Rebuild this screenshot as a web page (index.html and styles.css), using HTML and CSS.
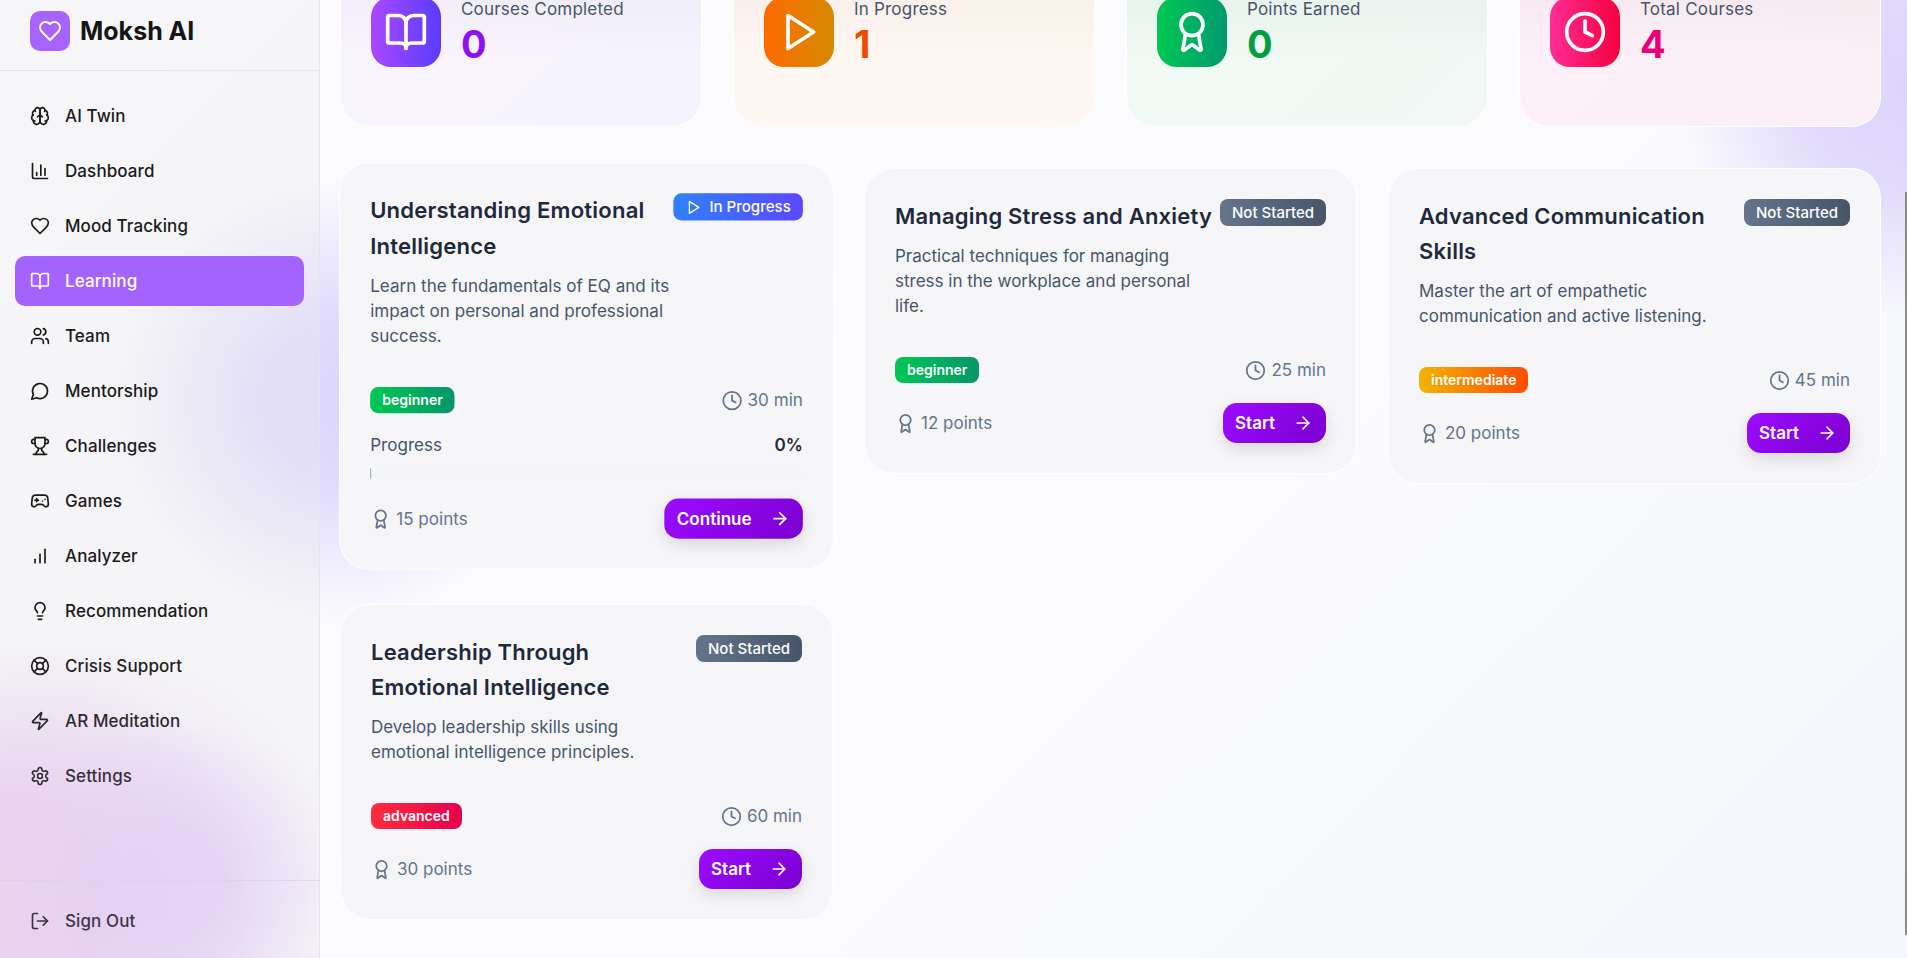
FILE: index.html
```html
<!DOCTYPE html>
<html>

<head>
    <title>Moksh AI - Learning</title>
    <link rel="stylesheet" href="styles.css">
</head>

<body>
    <svg class="sprite">
        <symbol id="i-brain" viewBox="0 0 24 24"><path d="M12 5a3 3 0 1 0-5.997.125 4 4 0 0 0-2.526 5.77 4 4 0 0 0 .556 6.588A4 4 0 1 0 12 18Z"/><path d="M12 5a3 3 0 1 1 5.997.125 4 4 0 0 1 2.526 5.77 4 4 0 0 1-.556 6.588A4 4 0 1 1 12 18Z"/><path d="M15 13a4.5 4.5 0 0 1-3-4 4.5 4.5 0 0 1-3 4"/><path d="M17.599 6.5a3 3 0 0 0 .399-1.375"/><path d="M6.003 5.125A3 3 0 0 0 6.401 6.5"/><path d="M3.477 10.896a4 4 0 0 1 .585-.396"/><path d="M19.938 10.5a4 4 0 0 1 .585.396"/><path d="M6 18a4 4 0 0 1-1.967-.516"/><path d="M19.967 17.484A4 4 0 0 1 18 18"/></symbol>
        <symbol id="i-chart" viewBox="0 0 24 24"><path d="M3 3v16a2 2 0 0 0 2 2h16"/><path d="M18 17V9"/><path d="M13 17V5"/><path d="M8 17v-3"/></symbol>
        <symbol id="i-heart" viewBox="0 0 24 24"><path d="M19 14c1.49-1.46 3-3.21 3-5.5A5.5 5.5 0 0 0 16.5 3c-1.76 0-3 .5-4.5 2-1.5-1.5-2.74-2-4.5-2A5.5 5.5 0 0 0 2 8.5c0 2.3 1.5 4.05 3 5.5l7 7Z"/></symbol>
        <symbol id="i-book" viewBox="0 0 24 24"><path d="M12 7v14"/><path d="M3 18a1 1 0 0 1-1-1V4a1 1 0 0 1 1-1h5a4 4 0 0 1 4 4 4 4 0 0 1 4-4h5a1 1 0 0 1 1 1v13a1 1 0 0 1-1 1h-6a3 3 0 0 0-3 3 3 3 0 0 0-3-3z"/></symbol>
        <symbol id="i-users" viewBox="0 0 24 24"><path d="M16 21v-2a4 4 0 0 0-4-4H6a4 4 0 0 0-4 4v2"/><circle cx="9" cy="7" r="4"/><path d="M22 21v-2a4 4 0 0 0-3-3.87"/><path d="M16 3.13a4 4 0 0 1 0 7.75"/></symbol>
        <symbol id="i-message" viewBox="0 0 24 24"><path d="M7.9 20A9 9 0 1 0 4 16.1L2 22Z"/></symbol>
        <symbol id="i-trophy" viewBox="0 0 24 24"><path d="M6 9H4.5a2.5 2.5 0 0 1 0-5H6"/><path d="M18 9h1.5a2.5 2.5 0 0 0 0-5H18"/><path d="M4 22h16"/><path d="M10 14.66V17c0 .55-.47.98-.97 1.21C7.85 18.75 7 20.24 7 22"/><path d="M14 14.66V17c0 .55.47.98.97 1.21C16.15 18.75 17 20.24 17 22"/><path d="M18 2H6v7a6 6 0 0 0 12 0V2Z"/></symbol>
        <symbol id="i-gamepad" viewBox="0 0 24 24"><line x1="6" x2="10" y1="11" y2="11"/><line x1="8" x2="8" y1="9" y2="13"/><line x1="15" x2="15.01" y1="12" y2="12"/><line x1="18" x2="18.01" y1="10" y2="10"/><path d="M17.32 5H6.68a4 4 0 0 0-3.978 3.59c-.006.052-.01.101-.017.152C2.604 9.416 2 14.456 2 16a3 3 0 0 0 3 3c1 0 1.5-.5 2-1l1.414-1.414A2 2 0 0 1 9.828 16h4.344a2 2 0 0 1 1.414.586L17 18c.5.5 1 1 2 1a3 3 0 0 0 3-3c0-1.545-.604-6.584-.685-7.258-.007-.05-.011-.1-.017-.151A4 4 0 0 0 17.32 5z"/></symbol>
        <symbol id="i-signal" viewBox="0 0 24 24"><line x1="18" x2="18" y1="20" y2="4"/><line x1="12" x2="12" y1="20" y2="10"/><line x1="6" x2="6" y1="20" y2="16"/></symbol>
        <symbol id="i-bulb" viewBox="0 0 24 24"><path d="M15 14c.2-1 .7-1.7 1.5-2.5 1-.9 1.5-2.2 1.5-3.5A6 6 0 0 0 6 8c0 1 .2 2.2 1.5 3.5.7.7 1.3 1.5 1.5 2.5"/><path d="M9 18h6"/><path d="M10 22h4"/></symbol>
        <symbol id="i-buoy" viewBox="0 0 24 24"><circle cx="12" cy="12" r="10"/><path d="m4.93 4.93 4.24 4.24"/><path d="m14.83 9.17 4.24-4.24"/><path d="m14.83 14.83 4.24 4.24"/><path d="m9.17 14.83-4.24 4.24"/><circle cx="12" cy="12" r="4"/></symbol>
        <symbol id="i-zap" viewBox="0 0 24 24"><path d="M4 14a1 1 0 0 1-.78-1.63l9.9-10.2a.5.5 0 0 1 .86.46l-1.92 6.02A1 1 0 0 0 13 10h7a1 1 0 0 1 .78 1.63l-9.9 10.2a.5.5 0 0 1-.86-.46l1.92-6.02A1 1 0 0 0 11 14z"/></symbol>
        <symbol id="i-gear" viewBox="0 0 24 24"><path d="M12.22 2h-.44a2 2 0 0 0-2 2v.18a2 2 0 0 1-1 1.73l-.43.25a2 2 0 0 1-2 0l-.15-.08a2 2 0 0 0-2.73.73l-.22.38a2 2 0 0 0 .73 2.73l.15.1a2 2 0 0 1 1 1.72v.51a2 2 0 0 1-1 1.74l-.15.09a2 2 0 0 0-.73 2.73l.22.38a2 2 0 0 0 2.73.73l.15-.08a2 2 0 0 1 2 0l.43.25a2 2 0 0 1 1 1.73V20a2 2 0 0 0 2 2h.44a2 2 0 0 0 2-2v-.18a2 2 0 0 1 1-1.73l.43-.25a2 2 0 0 1 2 0l.15.08a2 2 0 0 0 2.73-.73l.22-.39a2 2 0 0 0-.73-2.73l-.15-.08a2 2 0 0 1-1-1.74v-.5a2 2 0 0 1 1-1.74l.15-.09a2 2 0 0 0 .73-2.73l-.22-.38a2 2 0 0 0-2.73-.73l-.15.08a2 2 0 0 1-2 0l-.43-.25a2 2 0 0 1-1-1.73V4a2 2 0 0 0-2-2z"/><circle cx="12" cy="12" r="3"/></symbol>
        <symbol id="i-logout" viewBox="0 0 24 24"><path d="M9 21H5a2 2 0 0 1-2-2V5a2 2 0 0 1 2-2h4"/><polyline points="16 17 21 12 16 7"/><line x1="21" x2="9" y1="12" y2="12"/></symbol>
        <symbol id="i-play" viewBox="0 0 24 24"><polygon points="6 3 20 12 6 21 6 3"/></symbol>
        <symbol id="i-award" viewBox="0 0 24 24"><path d="m15.477 12.89 1.515 8.526a.5.5 0 0 1-.81.47l-3.58-2.687a1 1 0 0 0-1.197 0l-3.586 2.686a.5.5 0 0 1-.81-.469l1.514-8.526"/><circle cx="12" cy="8" r="6"/></symbol>
        <symbol id="i-clock" viewBox="0 0 24 24"><circle cx="12" cy="12" r="10"/><polyline points="12 6 12 12 16 14"/></symbol>
        <symbol id="i-arrow" viewBox="0 0 24 24"><path d="M5 12h14"/><path d="m12 5 7 7-7 7"/></symbol>
    </svg>

    <div class="app">
        <aside class="sidebar">
            <div class="brand">
                <span class="brand-logo"><svg class="icon"><use href="#i-heart"/></svg></span>
                <span class="brand-name">Moksh AI</span>
            </div>
            <nav class="nav">
                <a class="nav-item"><svg class="icon"><use href="#i-brain"/></svg>AI Twin</a>
                <a class="nav-item"><svg class="icon"><use href="#i-chart"/></svg>Dashboard</a>
                <a class="nav-item"><svg class="icon"><use href="#i-heart"/></svg>Mood Tracking</a>
                <a class="nav-item active"><svg class="icon"><use href="#i-book"/></svg>Learning</a>
                <a class="nav-item"><svg class="icon"><use href="#i-users"/></svg>Team</a>
                <a class="nav-item"><svg class="icon"><use href="#i-message"/></svg>Mentorship</a>
                <a class="nav-item"><svg class="icon"><use href="#i-trophy"/></svg>Challenges</a>
                <a class="nav-item"><svg class="icon"><use href="#i-gamepad"/></svg>Games</a>
                <a class="nav-item"><svg class="icon"><use href="#i-signal"/></svg>Analyzer</a>
                <a class="nav-item"><svg class="icon"><use href="#i-bulb"/></svg>Recommendation</a>
                <a class="nav-item"><svg class="icon"><use href="#i-buoy"/></svg>Crisis Support</a>
                <a class="nav-item"><svg class="icon"><use href="#i-zap"/></svg>AR Meditation</a>
                <a class="nav-item"><svg class="icon"><use href="#i-gear"/></svg>Settings</a>
            </nav>
            <div class="sidebar-foot">
                <a class="nav-item"><svg class="icon"><use href="#i-logout"/></svg>Sign Out</a>
            </div>
        </aside>

        <main class="main">
            <section class="stats">
                <div class="stat stat-purple">
                    <span class="stat-icon"><svg class="icon"><use href="#i-book"/></svg></span>
                    <div>
                        <div class="stat-label">Courses Completed</div>
                        <div class="stat-value">0</div>
                    </div>
                </div>
                <div class="stat stat-orange">
                    <span class="stat-icon"><svg class="icon"><use href="#i-play"/></svg></span>
                    <div>
                        <div class="stat-label">In Progress</div>
                        <div class="stat-value">1</div>
                    </div>
                </div>
                <div class="stat stat-green">
                    <span class="stat-icon"><svg class="icon"><use href="#i-award"/></svg></span>
                    <div>
                        <div class="stat-label">Points Earned</div>
                        <div class="stat-value">0</div>
                    </div>
                </div>
                <div class="stat stat-pink">
                    <span class="stat-icon"><svg class="icon"><use href="#i-clock"/></svg></span>
                    <div>
                        <div class="stat-label">Total Courses</div>
                        <div class="stat-value">4</div>
                    </div>
                </div>
            </section>

            <section class="courses">
                <article class="course raised">
                    <div class="course-head">
                        <div class="course-text">
                            <h3>Understanding Emotional Intelligence</h3>
                            <p>Learn the fundamentals of EQ and its impact on personal and professional success.</p>
                        </div>
                        <span class="status status-active"><svg class="icon"><use href="#i-play"/></svg>In Progress</span>
                    </div>
                    <div class="course-meta">
                        <span class="level level-beginner">beginner</span>
                        <span class="info"><svg class="icon"><use href="#i-clock"/></svg>30 min</span>
                    </div>
                    <div class="progress">
                        <div class="progress-row"><span>Progress</span><strong>0%</strong></div>
                        <div class="progress-track"><div class="progress-fill"></div></div>
                    </div>
                    <div class="course-foot">
                        <span class="info"><svg class="icon"><use href="#i-award"/></svg>15 points</span>
                        <button class="btn">Continue<svg class="icon"><use href="#i-arrow"/></svg></button>
                    </div>
                </article>

                <article class="course">
                    <div class="course-head">
                        <div class="course-text">
                            <h3>Managing Stress and Anxiety</h3>
                            <p>Practical techniques for managing stress in the workplace and personal life.</p>
                        </div>
                        <span class="status"><span>Not Started</span></span>
                    </div>
                    <div class="course-meta">
                        <span class="level level-beginner">beginner</span>
                        <span class="info"><svg class="icon"><use href="#i-clock"/></svg>25 min</span>
                    </div>
                    <div class="course-foot">
                        <span class="info"><svg class="icon"><use href="#i-award"/></svg>12 points</span>
                        <button class="btn">Start<svg class="icon"><use href="#i-arrow"/></svg></button>
                    </div>
                </article>

                <article class="course">
                    <div class="course-head">
                        <div class="course-text">
                            <h3>Advanced Communication Skills</h3>
                            <p>Master the art of empathetic communication and active listening.</p>
                        </div>
                        <span class="status"><span>Not Started</span></span>
                    </div>
                    <div class="course-meta">
                        <span class="level level-intermediate">intermediate</span>
                        <span class="info"><svg class="icon"><use href="#i-clock"/></svg>45 min</span>
                    </div>
                    <div class="course-foot">
                        <span class="info"><svg class="icon"><use href="#i-award"/></svg>20 points</span>
                        <button class="btn">Start<svg class="icon"><use href="#i-arrow"/></svg></button>
                    </div>
                </article>

                <article class="course">
                    <div class="course-head">
                        <div class="course-text">
                            <h3>Leadership Through Emotional Intelligence</h3>
                            <p>Develop leadership skills using emotional intelligence principles.</p>
                        </div>
                        <span class="status"><span>Not Started</span></span>
                    </div>
                    <div class="course-meta">
                        <span class="level level-advanced">advanced</span>
                        <span class="info"><svg class="icon"><use href="#i-clock"/></svg>60 min</span>
                    </div>
                    <div class="course-foot">
                        <span class="info"><svg class="icon"><use href="#i-award"/></svg>30 points</span>
                        <button class="btn">Start<svg class="icon"><use href="#i-arrow"/></svg></button>
                    </div>
                </article>
            </section>
        </main>
    </div>
    <div class="scroll-thumb"></div>
</body>
</html>
```

FILE: styles.css
```css
* {
    box-sizing: border-box;
}

html, body {
    height: 100%;
    margin: 0;
}

body {
    overflow: hidden;
    font-family: Inter, "Noto Sans", sans-serif;
    color: #1a1a1a;
    background-color: #fbfbfe;
    background-image:
        radial-gradient(circle 225px at 335px 400px, #ddd6fb 0%, #e0dafc 35%, rgba(224, 218, 252, 0) 100%),
        radial-gradient(circle 230px at 1907px 90px, #ddd4fc 0%, #e2dbfc 45%, rgba(226, 219, 252, 0) 100%),
        linear-gradient(135deg, #fcfbff 0%, #fbfbfe 60%, #f3f6fb 100%);
}

.sprite {
    display: none;
}

.icon {
    flex: none;
    width: 20px;
    height: 20px;
    fill: none;
    stroke: currentColor;
    stroke-width: 2;
    stroke-linecap: round;
    stroke-linejoin: round;
}

.app {
    display: flex;
    height: 100%;
}

/* sidebar */
.sidebar {
    position: relative;
    flex: none;
    display: flex;
    flex-direction: column;
    width: 320px;
    background-color: rgba(235, 235, 235, 0.36);
    background-image:
        radial-gradient(circle 165px at 175px 880px, #ebdcf7 0%, #ebdcf7 25%, rgba(235, 220, 247, 0) 100%),
        radial-gradient(circle 260px at 0 900px, #f0deee 0%, #efddf0 40%, rgba(239, 221, 240, 0) 100%);
    border-right: 1px solid #e6e5ec;
}

/* the pink glow also sits over the text, it tints the bottom items */
.sidebar::after {
    content: "";
    position: absolute;
    inset: 0;
    pointer-events: none;
    background-image: radial-gradient(circle 270px at 90px 900px, rgba(200, 160, 235, 0.2) 0%, rgba(200, 160, 235, 0.15) 50%, rgba(200, 160, 235, 0) 100%);
}

.brand {
    display: flex;
    align-items: center;
    gap: 10px;
    height: 71px;
    padding: 0 30px 8px;
    border-bottom: 1px solid #e6e6e8;
}

.brand-logo {
    display: flex;
    align-items: center;
    justify-content: center;
    width: 40px;
    height: 40px;
    color: #fff;
    background: #a763fd;
    border-radius: 10px;
}

.brand-logo .icon {
    width: 24px;
    height: 24px;
}

.brand-name {
    font-size: 25px;
    font-weight: 700;
    color: #141414;
}

.nav {
    display: flex;
    flex-direction: column;
    gap: 5px;
    padding: 20px 15px;
}

.nav-item {
    display: flex;
    align-items: center;
    gap: 15px;
    height: 50px;
    padding: 0 15px;
    font-size: 17px;
    font-weight: 450;
    letter-spacing: 0.1px;
    border-radius: 10px;
}

.nav-item.active {
    color: #fff;
    font-weight: 500;
    background: #a463fd;
}

.sidebar-foot {
    margin-top: auto;
    padding: 15px 15px 12px;
    border-top: 1px solid #e2dcea;
}

/* main area, scrolled down a bit in the shot */
.main {
    flex: 1;
    min-width: 0;
    padding: 0 26px 0 20px;
}

.stats {
    display: grid;
    grid-template-columns: repeat(4, 1fr);
    gap: 31px;
    margin-top: -34px;
    margin-bottom: 41px;
}

.stat {
    display: flex;
    align-items: flex-start;
    gap: 20px;
    height: 161px;
    padding: 30px;
    border: 1px solid rgba(255, 255, 255, 0.95);
    border-radius: 30px;
}

.stat-purple {
    background: linear-gradient(rgba(60, 50, 90, 0.05), transparent 90px), linear-gradient(135deg, #faf5ff, #f4f3fe);
}

.stat-orange {
    background: linear-gradient(rgba(90, 60, 30, 0.05), transparent 90px), linear-gradient(135deg, #fff6f2, #fdf8f1);
}

.stat-green {
    background: linear-gradient(rgba(30, 60, 50, 0.05), transparent 90px), linear-gradient(135deg, #f0faf4, #f1f8f5);
}

.stat-pink {
    background: linear-gradient(rgba(90, 40, 60, 0.05), transparent 90px), linear-gradient(135deg, #fdf0f7, #fbf0f5);
}

.stat-icon {
    flex: none;
    display: flex;
    align-items: center;
    justify-content: center;
    width: 70px;
    height: 70px;
    color: #fff;
    border-radius: 20px;
}

.stat-icon .icon {
    width: 44px;
    height: 44px;
}

.stat-purple .stat-icon {
    background: linear-gradient(90deg, #ab48ff, #5a3cff);
}

.stat-orange .stat-icon {
    background: linear-gradient(90deg, #ff6a00, #d58a00);
}

.stat-green .stat-icon {
    background: linear-gradient(90deg, #00c853, #009a6e);
}

.stat-pink .stat-icon {
    background: linear-gradient(90deg, #ff2d95, #f5003f);
}

.stat-label {
    font-size: 17px;
    letter-spacing: 0.2px;
    line-height: 24px;
    color: #475569;
}

.stat-value {
    font-size: 38px;
    font-weight: 700;
    line-height: 46px;
}

.stat-purple .stat-value {
    color: #8f10f0;
}

.stat-orange .stat-value {
    color: #f04a00;
}

.stat-green .stat-value {
    color: #00a040;
}

.stat-pink .stat-value {
    color: #e8007a;
}

/* course cards */
.courses {
    display: grid;
    grid-template-columns: repeat(3, 1fr);
    gap: 30px 31px;
    align-items: start;
}

.course {
    padding: 30px;
    background: #f6f6f9;
    border: 1px solid rgba(255, 255, 255, 0.95);
    border-radius: 30px;
}

/* first card was hovered in the shot */
.course.raised {
    transform: translateY(-5px) scale(1.004);
}

.course-head {
    display: flex;
    justify-content: space-between;
    align-items: flex-start;
    margin-bottom: 38px;
}

.course-text {
    flex: 1;
    min-width: 0;
}

.course-text h3 {
    margin: 0 0 10px;
    font-size: 22px;
    font-weight: 600;
    letter-spacing: 0.2px;
    line-height: 35px;
    color: #1e293b;
}

.course-text p {
    max-width: 310px;
    margin: 0;
    font-size: 17px;
    line-height: 25px;
    color: #475569;
}

.status {
    flex: none;
    display: flex;
    align-items: center;
    gap: 8px;
    height: 27px;
    padding: 0 12px;
    font-size: 15px;
    font-weight: 500;
    color: #fff;
    background: linear-gradient(90deg, #64748b, #475569);
    border-radius: 8px;
}

.status .icon {
    width: 16px;
    height: 16px;
}

.status-active {
    background: linear-gradient(90deg, #2f80ff, #5b48ff);
}

.course-meta {
    display: flex;
    justify-content: space-between;
    align-items: center;
    height: 26px;
    margin-bottom: 20px;
}

.level {
    padding: 0 12px;
    font-size: 14px;
    font-weight: 600;
    line-height: 26px;
    color: #fff;
    border-radius: 8px;
}

.level-beginner {
    background: linear-gradient(90deg, #00c853, #059669);
}

.level-intermediate {
    background: linear-gradient(90deg, #f1b300, #ff4d00);
}

.level-advanced {
    background: linear-gradient(90deg, #ff2d3f, #e6004c);
}

.info {
    display: flex;
    align-items: center;
    gap: 5px;
    font-size: 17px;
    color: #64748b;
}

.info .icon {
    width: 21px;
    height: 21px;
}

.progress {
    margin-bottom: 20px;
}

.progress-row {
    display: flex;
    justify-content: space-between;
    margin-bottom: 10px;
    font-size: 17px;
    line-height: 25px;
    color: #475569;
}

.progress-row strong {
    font-weight: 600;
    color: #1e293b;
}

.progress-track {
    height: 10px;
    background: #f3f5fa;
    border-radius: 5px;
}

.progress-fill {
    width: 1px;
    height: 100%;
    background: #94a3b8;
}

.course-foot {
    display: flex;
    justify-content: space-between;
    align-items: center;
}

.btn {
    display: flex;
    align-items: center;
    gap: 18px;
    height: 40px;
    padding: 0 13px 0 12px;
    font-family: inherit;
    font-size: 17px;
    font-weight: 600;
    color: #fff;
    background: linear-gradient(135deg, #9d0bff, #7a00d0);
    border: 0;
    border-radius: 14px;
    box-shadow: 0 6px 15px rgba(0, 0, 0, 0.12);
}

/* sliver of the window scrollbar at the right edge */
.scroll-thumb {
    position: fixed;
    top: 192px;
    right: 0;
    bottom: 23px;
    width: 2px;
    background: #8a8a8a;
}
```
